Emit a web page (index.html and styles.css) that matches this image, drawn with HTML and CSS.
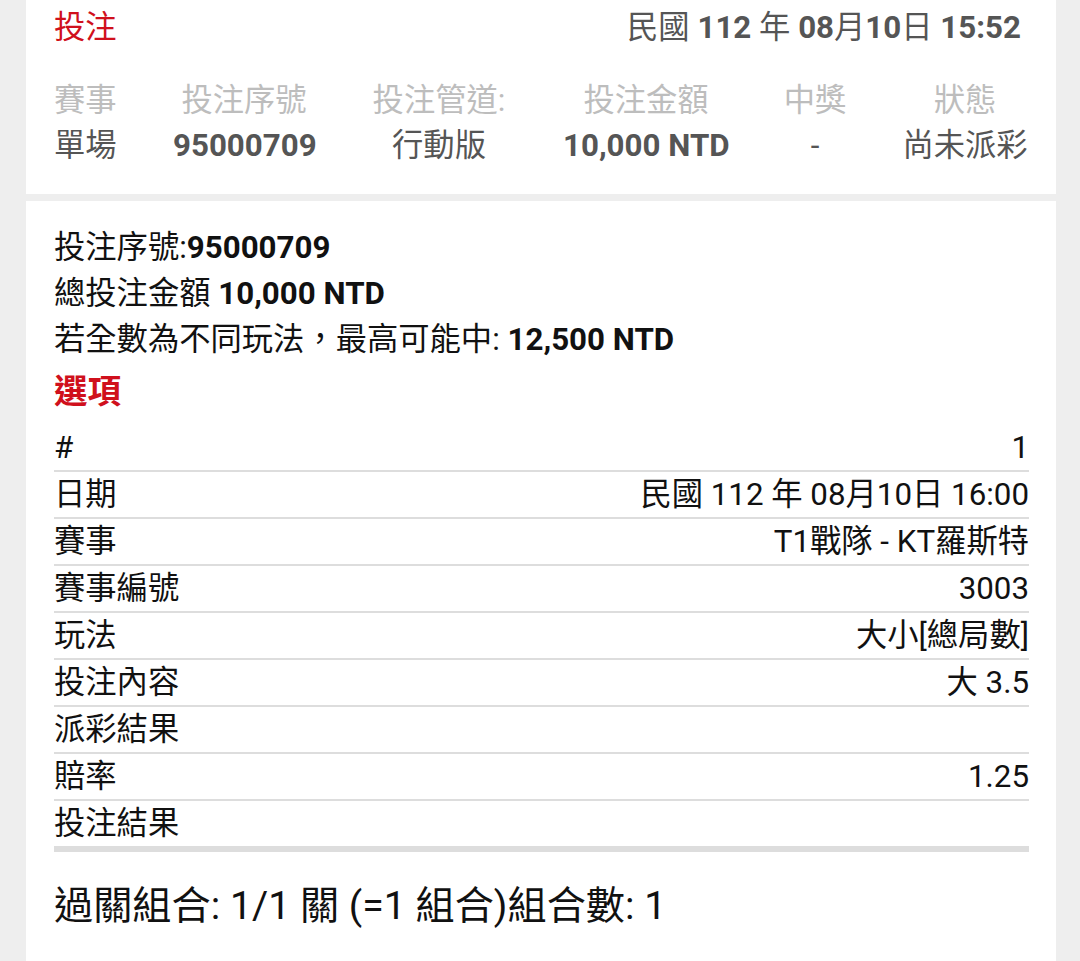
FILE: index.html
```html
<html lang="zh-Hant">

<head>
  <meta charset="UTF-8">
  <meta name="viewport" content="width=device-width, initial-scale=1.0">
  <title>投注明細</title>
  <link rel="stylesheet" href="styles.css">
</head>

<body>
  <div class="page">
    <section class="card summary">
      <div class="summary-head">
        <span class="title">投注</span>
        <span class="stamp">民國 <b>112</b> 年 <b>08</b>月<b>10</b>日 <b>15:52</b></span>
      </div>
      <div class="summary-grid">
        <span class="label first">賽事</span>
        <span class="label">投注序號</span>
        <span class="label">投注管道:</span>
        <span class="label">投注金額</span>
        <span class="label">中獎</span>
        <span class="label">狀態</span>
        <span class="value first">單場</span>
        <span class="value"><b>95000709</b></span>
        <span class="value">行動版</span>
        <span class="value"><b>10,000 NTD</b></span>
        <span class="value">-</span>
        <span class="value">尚未派彩</span>
      </div>
    </section>

    <section class="card detail">
      <p class="line">投注序號:<b>95000709</b></p>
      <p class="line">總投注金額 <b>10,000 NTD</b></p>
      <p class="line">若全數為不同玩法，最高可能中: <b>12,500 NTD</b></p>
      <h2 class="section-title">選項</h2>
      <div class="options">
        <div class="row"><span>#</span><span>1</span></div>
        <div class="row"><span>日期</span><span>民國 112 年 08月10日 16:00</span></div>
        <div class="row"><span>賽事</span><span>T1戰隊 - KT羅斯特</span></div>
        <div class="row"><span>賽事編號</span><span>3003</span></div>
        <div class="row"><span>玩法</span><span>大小[總局數]</span></div>
        <div class="row"><span>投注內容</span><span>大 3.5</span></div>
        <div class="row"><span>派彩結果</span><span></span></div>
        <div class="row"><span>賠率</span><span>1.25</span></div>
        <div class="row last"><span>投注結果</span><span></span></div>
      </div>
      <p class="combo">過關組合: 1/1 關 (=1 組合)組合數: 1</p>
    </section>
  </div>
</body>

</html>
```

FILE: styles.css
```css
body {
  margin: 0;
  background: #eeeeee;
  font-family: Roboto, "Noto Sans CJK TC", sans-serif;
  font-size: 31.3px;
  color: #111111;
}

.page {
  padding: 0 24px 0 26px;
  display: flex;
  flex-direction: column;
  gap: 7px;
}

.card {
  background: #ffffff;
  padding: 0 27px 0 28px;
}

/* top summary card */

.summary {
  padding-top: 8px;
  padding-bottom: 26px;
}

.summary-head {
  display: flex;
  justify-content: space-between;
  align-items: center;
  line-height: 40px;
  padding-right: 8px;
}

.title {
  color: #d0101c;
}

.stamp {
  color: #555555;
}

.summary-grid {
  margin-top: 30px;
  display: grid;
  grid-template-columns: 119px 142px 248px 166px 172px 1fr;
  line-height: 45px;
}

.summary-grid span {
  text-align: center;
  white-space: nowrap;
}

.summary-grid .first {
  text-align: left;
}

.label {
  color: #bdbdbd;
}

.value {
  color: #555555;
}

/* detail card */

.detail {
  padding-top: 24px;
  padding-bottom: 40px;
}

.line {
  margin: 0;
  line-height: 46px;
}

.section-title {
  margin: 6px 0 0;
  line-height: 46px;
  font-size: 33.5px;
  font-weight: bold;
  color: #d0101c;
}

.options {
  margin-top: 10px;
}

.row {
  display: flex;
  justify-content: space-between;
  height: 45px;
  line-height: 45px;
  border-bottom: 2px solid #dddddd;
}

.row.last {
  border-bottom-width: 6px;
}

.combo {
  margin: 29px 0 0;
  line-height: 50px;
  font-size: 39.2px;
}
```
